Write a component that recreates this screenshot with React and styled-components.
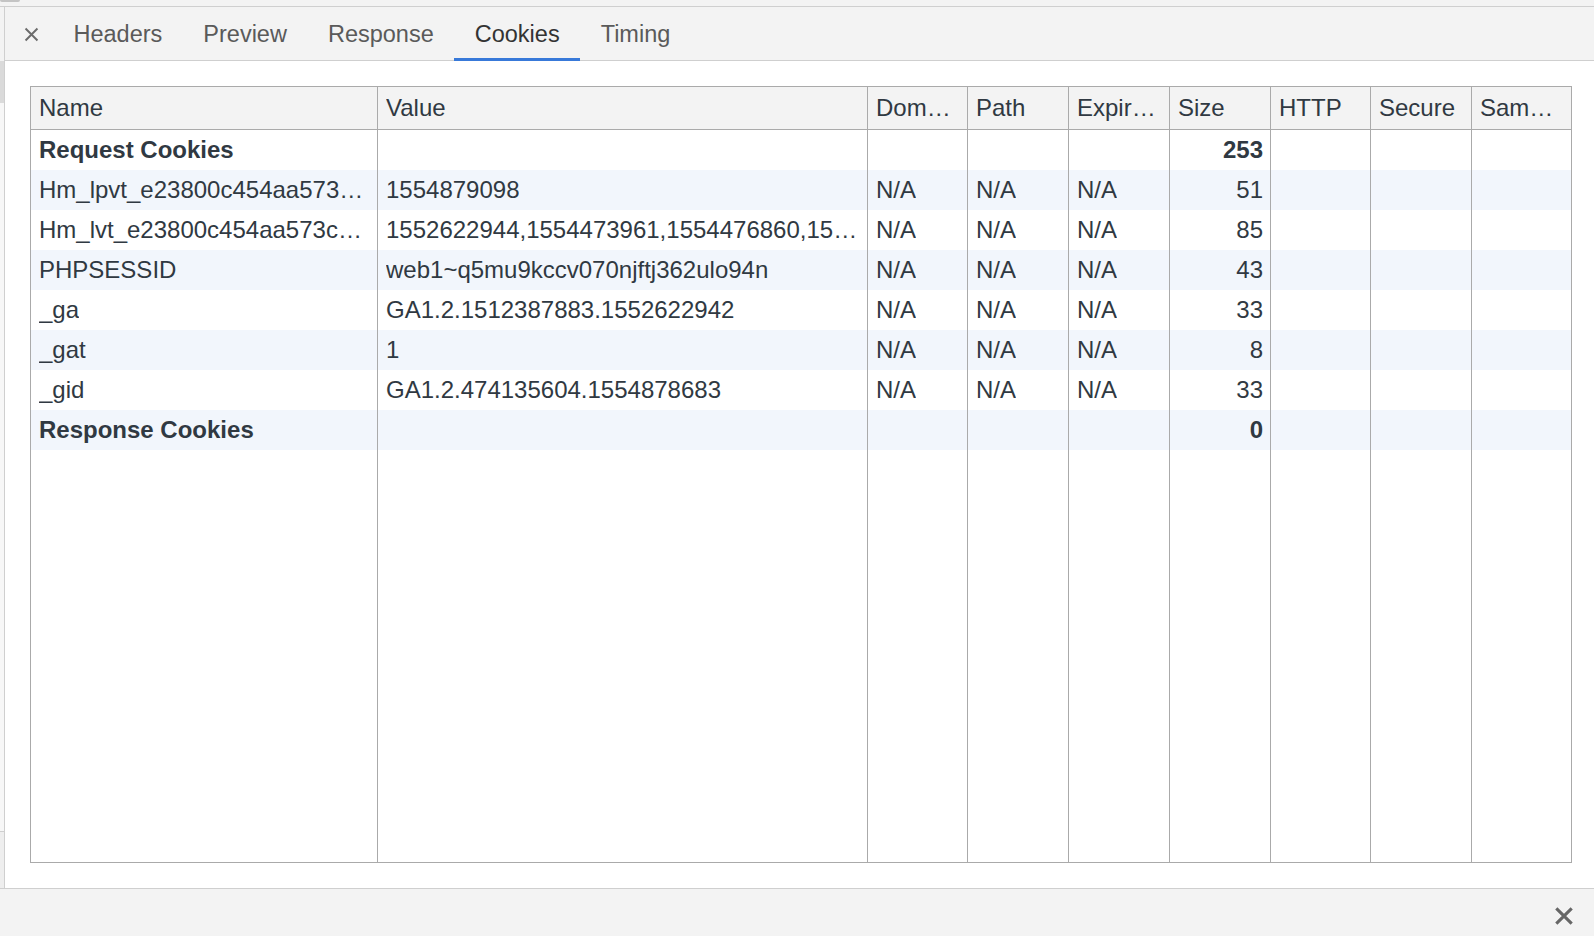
import React from "react";
import styled, { createGlobalStyle } from "styled-components";

const GlobalStyle = createGlobalStyle`
  html, body {
    margin: 0;
    padding: 0;
    background: #f3f3f3;
  }
  body {
    font-family: "Liberation Sans", Arial, Helvetica, sans-serif;
    -webkit-font-smoothing: antialiased;
  }
  * { box-sizing: border-box; }
`;

const Page = styled.div`
  width: 1594px;
  height: 936px;
  display: flex;
  flex-direction: column;
  overflow: hidden;
  background: #f3f3f3;
`;

const TopStrip = styled.div`
  height: 7px;
  flex: none;
  background: #f3f3f3;
  border-bottom: 1px solid #cfcfcf;
`;

const Pill = styled.div`
  width: 20px;
  height: 2px;
  background: #c4c4c4;
  border-radius: 0 0 4px 4px;
`;

const Main = styled.div`
  flex: 1;
  display: flex;
  min-height: 0;
`;

const LeftStrip = styled.div`
  width: 5px;
  flex: none;
  display: flex;
  flex-direction: column;
  border-right: 1px solid #cfcfcf;
  background: #f7f7f7;
`;

const StripBlock = styled.div`
  height: ${(p) => p.$h}px;
  flex: ${(p) => (p.$grow ? 1 : "none")};
  background: ${(p) => p.$bg};
  border-bottom: ${(p) => (p.$line ? "1px solid #cfcfcf" : "none")};
`;

const Panel = styled.div`
  flex: 1;
  display: flex;
  flex-direction: column;
  min-width: 0;
`;

const TabBar = styled.div`
  height: 54px;
  flex: none;
  display: flex;
  align-items: stretch;
  background: #f3f3f3;
  border-bottom: 1px solid #cfcfcf;
`;

const CloseTab = styled.div`
  display: flex;
  align-items: center;
  padding: 1px 13px 0 18px;
  color: #6b6b6b;
`;

const Tab = styled.div`
  display: flex;
  align-items: center;
  padding: 3px 20.5px 0;
  font-size: 23.5px;
  color: ${(p) => (p.$active ? "#333333" : "#5a5a5a")};
  border-bottom: 3px solid ${(p) => (p.$active ? "#3879d9" : "transparent")};
  margin-bottom: -1px;
`;

const Content = styled.div`
  flex: 1;
  background: #ffffff;
  display: flex;
  flex-direction: column;
  padding: 25px 22px 25px 25px;
  min-height: 0;
`;

const Table = styled.div`
  flex: 1;
  display: flex;
  flex-direction: column;
  border: 1px solid #aaaaaa;
  color: #303942;
  font-size: 24px;
`;

const COLS = "347px 490px 100px 101px 101px 101px 100px 101px 1fr";

const Row = styled.div`
  display: grid;
  grid-template-columns: ${COLS};
  height: ${(p) => (p.$header ? 43 : 40)}px;
  flex: none;
  background: ${(p) =>
    p.$header ? "#f3f3f3" : p.$striped ? "#f2f6fc" : "#ffffff"};
  border-bottom: ${(p) => (p.$header ? "1px solid #aaaaaa" : "none")};
`;

const FillerRow = styled.div`
  display: grid;
  grid-template-columns: ${COLS};
  flex: 1;
  background: #ffffff;
`;

const Cell = styled.div`
  display: flex;
  align-items: center;
  justify-content: ${(p) => (p.$right ? "flex-end" : "flex-start")};
  padding: ${(p) => (p.$header ? "0 7px 1px 8px" : "0 7px 0 8px")};
  border-right: 1px solid #aaaaaa;
  font-weight: ${(p) => (p.$bold ? 700 : 400)};
  white-space: nowrap;
  overflow: hidden;
  min-width: 0;
  &:last-child {
    border-right: none;
  }
`;

const CellText = styled.span`
  overflow: hidden;
  text-overflow: ellipsis;
`;

const Footer = styled.div`
  height: 48px;
  flex: none;
  display: flex;
  align-items: center;
  justify-content: flex-end;
  padding: 7px 19px 0 0;
  background: #f3f3f3;
  border-top: 1px solid #cfcfcf;
  color: #666666;
`;

const CloseIcon = ({ size, stroke }) => (
  <svg width={size} height={size} viewBox="0 0 20 20" fill="none">
    <path
      d="M3 3 L17 17 M17 3 L3 17"
      stroke="currentColor"
      strokeWidth={stroke}
      strokeLinecap="butt"
    />
  </svg>
);

const headers = ["Name", "Value", "Dom…", "Path", "Expir…", "Size", "HTTP", "Secure", "Sam…"];

const rows = [
  { bold: true, cells: ["Request Cookies", "", "", "", "", "253", "", "", ""] },
  { cells: ["Hm_lpvt_e23800c454aa573…", "1554879098", "N/A", "N/A", "N/A", "51", "", "", ""] },
  { cells: ["Hm_lvt_e23800c454aa573c…", "1552622944,1554473961,1554476860,15…", "N/A", "N/A", "N/A", "85", "", "", ""] },
  { cells: ["PHPSESSID", "web1~q5mu9kccv070njftj362ulo94n", "N/A", "N/A", "N/A", "43", "", "", ""] },
  { cells: ["_ga", "GA1.2.1512387883.1552622942", "N/A", "N/A", "N/A", "33", "", "", ""] },
  { cells: ["_gat", "1", "N/A", "N/A", "N/A", "8", "", "", ""] },
  { cells: ["_gid", "GA1.2.474135604.1554878683", "N/A", "N/A", "N/A", "33", "", "", ""] },
  { bold: true, cells: ["Response Cookies", "", "", "", "", "0", "", "", ""] },
];

const tabs = ["Headers", "Preview", "Response", "Cookies", "Timing"];

export default function App() {
  return (
    <>
      <GlobalStyle />
      <Page>
        <TopStrip>
          <Pill />
        </TopStrip>
        <Main>
          <LeftStrip>
            <StripBlock $h={54} $bg="#f3f3f3" />
            <StripBlock $h={42} $bg="#dadada" />
            <StripBlock $h={729} $bg="#f7f7f7" $line />
            <StripBlock $grow $bg="#eeeeee" />
          </LeftStrip>
          <Panel>
            <TabBar>
              <CloseTab>
                <CloseIcon size={17} stroke={2.3} />
              </CloseTab>
              {tabs.map((t) => (
                <Tab key={t} $active={t === "Cookies"}>
                  {t}
                </Tab>
              ))}
            </TabBar>
            <Content>
              <Table>
                <Row $header>
                  {headers.map((h, i) => (
                    <Cell key={i} $header>
                      <CellText>{h}</CellText>
                    </Cell>
                  ))}
                </Row>
                {rows.map((r, ri) => (
                  <Row key={ri} $striped={ri % 2 === 1}>
                    {r.cells.map((c, ci) => (
                      <Cell key={ci} $right={ci === 5} $bold={r.bold}>
                        <CellText>{c}</CellText>
                      </Cell>
                    ))}
                  </Row>
                ))}
                <FillerRow>
                  {headers.map((h, i) => (
                    <Cell key={i} />
                  ))}
                </FillerRow>
              </Table>
            </Content>
          </Panel>
        </Main>
        <Footer>
          <CloseIcon size={22} stroke={2.8} />
        </Footer>
      </Page>
    </>
  );
}
